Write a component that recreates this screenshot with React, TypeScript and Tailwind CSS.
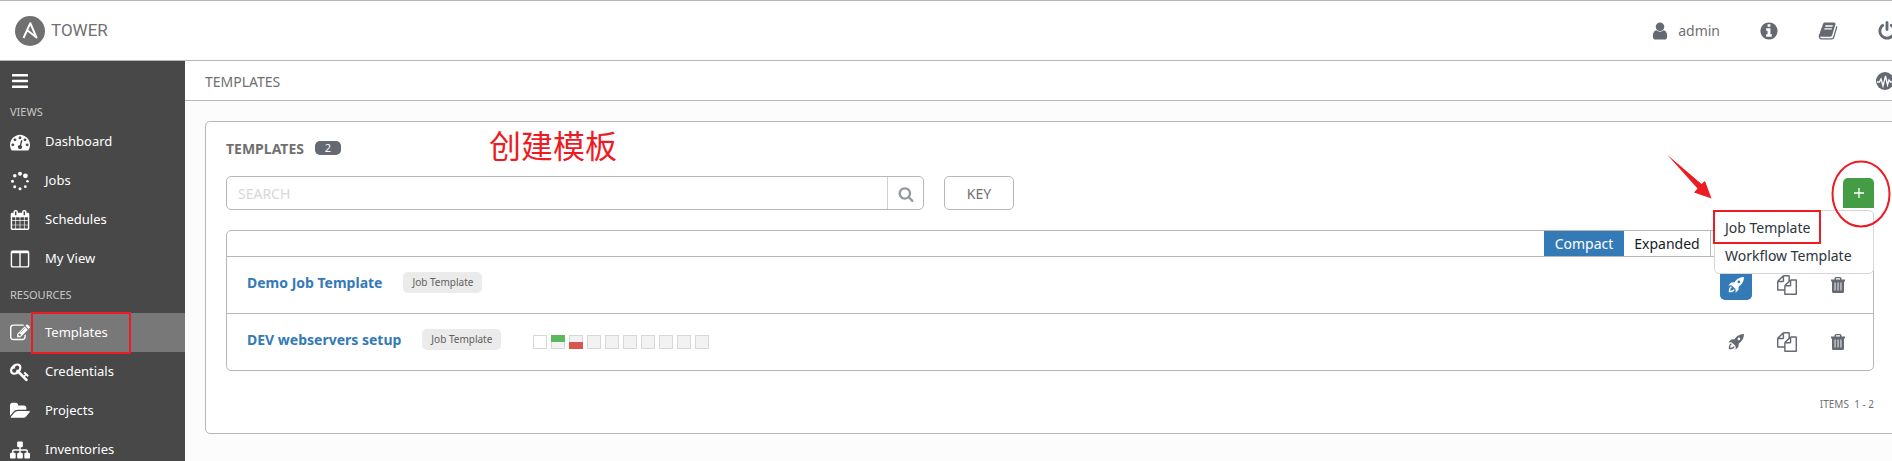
import React from 'react';

type IconProps = { d: string; box?: string; className?: string };

function Icon({ d, box = '0 0 1792 1792', className = '' }: IconProps) {
  return (
    <svg viewBox={box} className={className} fill="currentColor" aria-hidden="true">
      <path d={d} fillRule="evenodd" />
    </svg>
  );
}

const P = {
  dashboard:
    'M384 1152q0-53-37.5-90.5T256 1024t-90.5 37.5T128 1152t37.5 90.5T256 1280t90.5-37.5T384 1152zm192-448q0-53-37.5-90.5T448 576t-90.5 37.5T320 704t37.5 90.5T448 832t90.5-37.5T576 704zm428 481l101-382q6-26-7.5-48.5T1059 725t-48 6.5-30 39.5L880 1154q-60 5-107 43.5t-63 98.5q-20 77 20 146t117 89 146-20 89-117q16-60-6-117t-72-91zm660-33q0-53-37.5-90.5T1536 1024t-90.5 37.5T1408 1152t37.5 90.5T1536 1280t90.5-37.5T1664 1152zm-640-640q0-53-37.5-90.5T896 384t-90.5 37.5T768 512t37.5 90.5T896 640t90.5-37.5T1024 512zm448 192q0-53-37.5-90.5T1344 576t-90.5 37.5T1216 704t37.5 90.5T1344 832t90.5-37.5T1472 704zm320 448q0 261-141 483-19 29-54 29H195q-35 0-54-29Q0 1414 0 1152q0-182 71-348t191-286 286-191 348-71 348 71 286 191 191 286 71 348z',
  calendar:
    'M192 1664h288v-288H192v288zm352 0h320v-288H544v288zm-352-352h288V992H192v320zm352 0h320V992H544v320zM192 928h288V640H192v288zm736 736h320v-288H928v288zM544 928h320V640H544v288zm768 736h288v-288h-288v288zm-384-352h320V992H928v320zM576 448V160q0-13-9.5-22.5T544 128h-64q-13 0-22.5 9.5T448 160v288q0 13 9.5 22.5T480 480h64q13 0 22.5-9.5T576 448zm736 864h288V992h-288v320zM928 928h320V640H928v288zm384 0h288V640h-288v288zm32-480V160q0-13-9.5-22.5T1312 128h-64q-13 0-22.5 9.5T1216 160v288q0 13 9.5 22.5t22.5 9.5h64q13 0 22.5-9.5t9.5-22.5zm384-64v1280q0 52-38 90t-90 38H192q-52 0-90-38t-38-90V384q0-52 38-90t90-38h128v-96q0-66 47-113T480 0h64q66 0 113 47t47 113v96h384v-96q0-66 47-113t113-47h64q66 0 113 47t47 113v96h128q52 0 90 38t38 90z',
  columns:
    'M160 1536h608V384H128v1120q0 13 9.5 22.5t22.5 9.5zm1376-32V384H896v1152h608q13 0 22.5-9.5t9.5-22.5zm128-1216v1216q0 66-47 113t-113 47H160q-66 0-113-47T0 1504V288q0-66 47-113t113-47h1344q66 0 113 47t47 113z',
  edit:
    'M888 1184l116-116-152-152-116 116v56h96v96h56zm440-720q-16-16-33 1L945 815q-17 17-1 33t33-1l350-350q17-17 1-33zm80 594v190q0 119-84.5 203.5T1120 1536H288q-119 0-203.5-84.5T0 1248V416q0-119 84.5-203.5T288 128h832q63 0 117 25 15 7 18 23 3 17-9 29l-49 49q-14 14-32 8-23-6-45-6H288q-66 0-113 47t-47 113v832q0 66 47 113t113 47h832q66 0 113-47t47-113v-126q0-13 9-22l64-64q15-15 35-7t20 29zm-96-738l288 288-672 672H640V992zm444 132l-92 92-288-288 92-92q28-28 68-28t68 28l152 152q28 28 28 68t-28 68z',
  key:
    'M832 512q0-80-56-136t-136-56-136 56-56 136q0 42 19 83-41-19-83-19-80 0-136 56t-56 136 56 136 136 56 136-56 56-136q0-42-19-83 41 19 83 19 80 0 136-56t56-136zm851 704q0 17-49 66t-66 49q-9 0-28.5-16t-36.5-33-38.5-40-24.5-26l-96 96 220 220q28 28 28 68 0 42-39 81t-81 39q-40 0-68-28l-671-671q-176 131-365 131-163 0-265.5-102.5T0 784q0-160 95-313t248-248 313-95q163 0 265.5 102.5T1024 496q0 189-131 365l355 355 96-96q-3-3-26-24.5t-40-38.5-33-36.5-16-28.5q0-17 49-66t66-49q13 0 23 10 6 6 46 44.5t82 79.5 86.5 86 73 78 28.5 41z',
  folder:
    'M1815 952q0 31-31 66l-336 396q-43 51-120.5 86.5T1184 1536H96q-34 0-60.5-13T9 1480q0-31 31-66l336-396q43-51 120.5-86.5T640 896h1088q34 0 60.5 13t26.5 43zm-343-344v160H640q-94 0-197 47.5T279 935L-58 1331l-5 6q0-4-.5-12.5T-64 1312V352q0-92 66-158t158-66h320q92 0 158 66t66 158v32h544q92 0 158 66t66 158z',
  sitemap:
    'M1792 1248v320q0 40-28 68t-68 28h-320q-40 0-68-28t-28-68v-320q0-40 28-68t68-28h96V960H960v192h96q40 0 68 28t28 68v320q0 40-28 68t-68 28H736q-40 0-68-28t-28-68v-320q0-40 28-68t68-28h96V960H320v192h96q40 0 68 28t28 68v320q0 40-28 68t-68 28H96q-40 0-68-28t-28-68v-320q0-40 28-68t68-28h96V960q0-52 38-90t90-38h512V640h-96q-40 0-68-28t-28-68V224q0-40 28-68t68-28h320q40 0 68 28t28 68v320q0 40-28 68t-68 28h-96v192h512q52 0 90 38t38 90v192h96q40 0 68 28t28 68z',
  user:
    'M1536 1399q0 109-62.5 187t-150.5 78H469q-88 0-150.5-78T256 1399q0-85 8.5-160.5t31.5-152 58.5-131 94-89T583 832q131 128 313 128t313-128q76 0 134.5 34.5t94 89 58.5 131 31.5 152 8.5 160.5zm-256-887q0 159-112.5 271.5T896 896 624.5 783.5 512 512t112.5-271.5T896 128t271.5 112.5T1280 512z',
  info:
    'M1152 1376v-160q0-14-9-23t-23-9h-96V672q0-14-9-23t-23-9H672q-14 0-23 9t-9 23v160q0 14 9 23t23 9h96v320h-96q-14 0-23 9t-9 23v160q0 14 9 23t23 9h448q14 0 23-9t9-23zm-128-896V320q0-14-9-23t-23-9H800q-14 0-23 9t-9 23v160q0 14 9 23t23 9h192q14 0 23-9t9-23zm640 416q0 209-103 385.5T1281.5 1561 896 1664t-385.5-103T231 1281.5 128 896t103-385.5T510.5 231 896 128t385.5 103T1561 510.5 1664 896z',
  book:
    'M1703 478q40 57 18 129l-275 906q-19 64-76.5 107.5T1247 1664H324q-77 0-148.5-53.5T76 1479q-24-67-2-127 0-4 3-27t4-37q1-8-3-21.5t-3-19.5q2-11 8-21t16.5-23.5T116 1179q23-38 45-91.5t30-91.5q3-10 .5-30t-.5-28q3-11 17-28t17-23q21-36 42-92t25-90q1-9-2.5-32t.5-28q4-13 22-30.5t22-22.5q19-26 42.5-84.5T404 411q1-8-3-25.5t-2-26.5q2-8 9-18t18-23 17-21q8-12 16.5-30.5t15-35 16-36 19.5-32T533.5 139t36-11.5T617 133l-1 3q38-9 51-9h761q74 0 114 56t18 130l-274 906q-36 119-71.5 153.5T1086 1407H217q-27 0-38 15-11 16-1 43 24 70 144 70h923q29 0 56-15.5t35-41.5l300-987q7-22 5-57 38 15 59 43zm-1064 2q-4 13 2 22.5t20 9.5h608q13 0 25.5-9.5T1311 480l21-64q4-13-2-22.5t-20-9.5H702q-13 0-25.5 9.5T660 416zm-83 256q-4 13 2 22.5t20 9.5h608q13 0 25.5-9.5T1228 736l21-64q4-13-2-22.5t-20-9.5H619q-13 0-25.5 9.5T577 672z',
  power:
    'M1664 896q0 156-61 298t-164 245-245 164-298 61-298-61-245-164-164-245-61-298q0-182 80.5-343T434 283q43-32 95.5-25t83.5 50q32 42 24.5 94.5T587 489q-98 74-151.5 181T382 896q0 104 40.5 198.5T532 1258t163.5 109.5T894 1408t198.5-40.5T1256 1258t109.5-163.5T1406 896q0-119-53.5-226T1201 489q-42-32-49.5-84.5T1176 310q31-43 84-50t95 25q145 109 225.5 270t80.5 341zM1024 128v640q0 52-38 90t-90 38-90-38-38-90V128q0-52 38-90t90-38 90 38 38 90z',
  search:
    'M1216 832q0-185-131.5-316.5T768 384 451.5 515.5 320 832t131.5 316.5T768 1280t316.5-131.5T1216 832zm512 832q0 52-38 90t-90 38q-54 0-90-38l-343-342q-179 124-399 124-143 0-273.5-55.5t-225-150-150-225T64 832t55.5-273.5 150-225 225-150T768 128t273.5 55.5 225 150 150 225T1472 832q0 220-124 399l343 343q37 37 37 90z',
  copy:
    'M1696 384q40 0 68 28t28 68v1216q0 40-28 68t-68 28H736q-40 0-68-28t-28-68v-288H96q-40 0-68-28t-28-68V640q0-40 20-88t48-76L476 68q28-28 76-48t88-20h416q40 0 68 28t28 68v328q68-40 128-40zm-544 213L853 896h299zM512 213L213 512h299zm196 647l316-316V128H640v416q0 40-28 68t-68 28H128v640h512v-256q0-40 20-88t48-76zm956 804V512h-384v416q0 40-28 68t-68 28H768v640z',
};

function SpinnerIcon() {
  return (
    <svg viewBox="0 0 20 20" className="size-5" fill="currentColor" aria-hidden="true">
      <circle cx="10" cy="2.7" r="2" />
      <circle cx="15.4" cy="4.8" r="2.4" />
      <circle cx="17.5" cy="10.3" r="1.3" />
      <circle cx="15.3" cy="15.7" r="1.4" />
      <circle cx="10" cy="17.8" r="1.5" />
      <circle cx="4.7" cy="15.7" r="1.5" />
      <circle cx="2.5" cy="10.3" r="1.5" />
      <circle cx="4.8" cy="4.8" r="1.8" />
    </svg>
  );
}

function RocketIcon() {
  return (
    <svg viewBox="0 0 16 16" className="size-4" fill="currentColor" aria-hidden="true">
      <path
        fillRule="evenodd"
        d="M16 0C12.500.2 9.800 1.300 7.800 3.600L6.500 5.200 3.200 5.600.2 8.600 3.300 8.300 4.400 9 7 11.600 7.800 12.900 7.400 15.800 10.400 12.900 10.800 9.500 12.400 8.200C14.800 6.200 15.800 3.500 16 0ZM10.900 3.600A1.300 1.300 0 1 1 10.900 6.200 1.300 1.300 0 0 1 10.900 3.600ZM3.300 9.300C1.200 10 .7 12.300.8 15.200 3.700 15.300 6 14.800 6.700 12.700L5.500 12.300C5 13.400 3.800 13.800 2.300 13.700 2.200 12.200 2.600 11 3.700 10.500Z"
      />
    </svg>
  );
}

function TrashIcon() {
  return (
    <svg viewBox="0 0 14 16" className="h-4 w-[14px]" fill="currentColor" aria-hidden="true">
      <path
        fillRule="evenodd"
        d="M3.500 2.500V1.500Q3.500 0 5 0H9Q10.500 0 10.500 1.500V2.500H14V4.500H13V14.500Q13 16 11.500 16H2.500Q1 16 1 14.500V4.500H0V2.500ZM5 2.500H9V1.300H5ZM3.600 5.500V13.500H4.500V5.500ZM6.600 5.500V13.500H7.500V5.500ZM9.500 5.500V13.500H10.400V5.500Z"
      />
    </svg>
  );
}

type NavItem = { label: string; icon: React.ReactNode; active?: boolean };

const views: NavItem[] = [
  { label: 'Dashboard', icon: <Icon d={P.dashboard} className="size-5" /> },
  { label: 'Jobs', icon: <SpinnerIcon /> },
  { label: 'Schedules', icon: <Icon d={P.calendar} className="size-5" /> },
  { label: 'My View', icon: <Icon d={P.columns} box="-64 0 1792 1792" className="size-5" /> },
];

const resources: NavItem[] = [
  { label: 'Templates', icon: <Icon d={P.edit} className="size-5" />, active: true },
  { label: 'Credentials', icon: <Icon d={P.key} className="size-5" /> },
  { label: 'Projects', icon: <Icon d={P.folder} box="-64 0 1880 1792" className="size-5" /> },
  { label: 'Inventories', icon: <Icon d={P.sitemap} className="size-5" /> },
];

function NavGroup({ title, items, className = '' }: { title: string; items: NavItem[]; className?: string }) {
  return (
    <section>
      <h2 className={'pl-[10px] text-[11px] leading-5 text-[#c8c8c8] ' + className}>{title}</h2>
      <ul>
        {items.map((item) => (
          <li key={item.label}>
            <a
              href="#"
              className={
                'flex h-[39px] items-center gap-[15px] pl-[10px] text-[13px] text-white ' +
                (item.active ? 'bg-[#787878]' : '')
              }
            >
              {item.icon}
              <span className="relative flex h-full items-center">
                {item.label}
                {item.active && (
                  <span className="pointer-events-none absolute -top-px -right-[23px] -bottom-[2px] -left-[14px] border-2 border-[#ed1c24]" />
                )}
              </span>
            </a>
          </li>
        ))}
      </ul>
    </section>
  );
}

type Status = 'none' | 'ok' | 'failed' | 'empty';

function Sparkline({ runs }: { runs: Status[] }) {
  return (
    <div className="flex gap-1">
      {runs.map((run, i) => (
        <span
          key={i}
          className={
            'flex size-[14px] flex-col border border-[#d7d7d7] ' + (run === 'none' ? 'bg-white' : 'bg-[#f2f2f2]')
          }
        >
          {run === 'ok' && <span className="-mx-px -mt-px h-[7px] shrink-0 bg-[#5cb85c]" />}
          {run === 'failed' && <span className="-mx-px -mb-px mt-auto h-[7px] shrink-0 bg-[#d9534f]" />}
        </span>
      ))}
    </div>
  );
}

type Template = { name: string; primary?: boolean; runs?: Status[] };

const templates: Template[] = [
  { name: 'Demo Job Template', primary: true },
  {
    name: 'DEV webservers setup',
    runs: ['none', 'ok', 'failed', 'empty', 'empty', 'empty', 'empty', 'empty', 'empty', 'empty'],
  },
];

function TemplateRow({ item }: { item: Template }) {
  return (
    <li className="flex h-[57px] items-center border-t border-[#b7b7b7] pr-[19px] pl-5">
      <a href="#" className="mb-[6px] text-[14px] font-bold text-[#337ab7]">
        {item.name}
      </a>
      <span className="mb-[6px] ml-[21px] rounded-[5px] bg-[#ebebeb] px-[9px] text-[10px] leading-[21px] text-[#606060]">
        Job Template
      </span>
      {item.runs && (
        <div className="ml-8">
          <Sparkline runs={item.runs} />
        </div>
      )}
      <div className="ml-auto flex items-center gap-[19px] text-[#646972]">
        <button
          aria-label={'Launch ' + item.name}
          className={
            'flex h-[30px] w-8 items-center justify-center rounded-[5px] ' +
            (item.primary ? 'bg-[#337ab7] text-white' : '')
          }
        >
          <RocketIcon />
        </button>
        <button aria-label={'Copy ' + item.name} className="flex h-[30px] w-8 items-center justify-center">
          <Icon d={P.copy} className="size-5" />
        </button>
        <button aria-label={'Delete ' + item.name} className="flex h-[30px] w-8 items-center justify-center">
          <TrashIcon />
        </button>
      </div>
    </li>
  );
}

export default function App() {
  return (
    <div className="flex min-h-screen flex-col overflow-hidden bg-[#fcfcfc] font-['Noto_Sans','Noto_Sans_CJK_SC',sans-serif] text-[#707070]">
      <header className="flex h-[61px] shrink-0 items-center justify-between border-t border-b border-[#b7b7b7] bg-white pl-[15px]">
        <a href="#" className="flex items-center gap-[6px] text-[17px]">
          <svg viewBox="0 0 30 30" className="size-[30px]" aria-hidden="true">
            <circle cx="15" cy="15" r="15" fill="#707070" />
            <path d="M8.500 22 15.300 7.200 21.500 21.500 12 14" fill="none" stroke="#fff" strokeWidth="2" strokeLinejoin="round" />
          </svg>
          <span className="font-['Roboto',sans-serif]">TOWER</span>
        </a>
        <nav className="-mr-[5px] flex items-center gap-[39px] text-[#646972]">
          <a href="#" className="flex items-center gap-2 text-[14px]">
            <Icon d={P.user} className="size-5" />
            <span className="text-[#707070]">admin</span>
          </a>
          <a href="#" aria-label="About">
            <Icon d={P.info} className="size-5" />
          </a>
          <a href="#" aria-label="Documentation">
            <Icon d={P.book} className="size-5" />
          </a>
          <a href="#" aria-label="Log out">
            <Icon d={P.power} className="size-5" />
          </a>
        </nav>
      </header>

      <div className="flex h-[400px] flex-1">
        <aside className="w-[185px] shrink-0 overflow-hidden bg-[#484848]">
          <button aria-label="Toggle menu" className="flex h-[41px] items-center pb-px pl-3 text-white">
            <svg viewBox="0 0 16 14" className="h-[14px] w-4" fill="currentColor" aria-hidden="true">
              <rect width="16" height="2.500" rx=".5" />
              <rect y="5.700" width="16" height="2.500" rx=".5" />
              <rect y="11.400" width="16" height="2.500" rx=".5" />
            </svg>
          </button>
          <NavGroup title="VIEWS" items={views} />
          <NavGroup title="RESOURCES" items={resources} className="pt-[7px] pb-2" />
        </aside>

        <main className="min-w-0 flex-1">
          <div className="flex h-10 items-center justify-between border-b border-[#b7b7b7] bg-white pl-5">
            <h1 className="pt-[2px] text-[14px]">TEMPLATES</h1>
            <button aria-label="Activity stream" className="-mr-[2px] text-[#646972]">
              <svg viewBox="0 0 18 18" className="size-[18px]" aria-hidden="true">
                <circle cx="9" cy="9" r="9" fill="currentColor" />
                <path d="M1 10h2.500L5 7l2 7 2.500-10 2 9 1.500-5 1.500 2H17" fill="none" stroke="#fff" strokeWidth="1.300" />
              </svg>
            </button>
          </div>

          <section className="-mr-2 mt-5 ml-5 rounded-[5px] border border-[#b7b7b7] bg-white pt-[14px] pr-[25px] pb-5 pl-5">
            <div className="flex h-6 items-center">
              <h2 className="text-[14px] font-bold">TEMPLATES</h2>
              <span className="ml-[11px] h-[14px] w-[26px] rounded-[5px] bg-[#646972] text-center text-[11px] leading-[14px] text-white">
                2
              </span>
              <p className="mb-1 ml-[148px] text-[32px] leading-6 text-[#ed1c24]">创建模板</p>
            </div>

            <div className="mt-4 flex h-[34px] items-stretch">
              <form className="flex w-[698px] rounded-[5px] border border-[#b7b7b7]">
                <input
                  aria-label="Search"
                  placeholder="SEARCH"
                  className="min-w-0 flex-1 bg-transparent pl-[11px] text-[14px] outline-none placeholder:text-[#d7d7d7]"
                />
                <button
                  type="button"
                  aria-label="Search templates"
                  className="flex w-9 items-center justify-center border-l border-[#d0d0d0] pt-[2px] text-[#93979f]"
                >
                  <Icon d={P.search} className="size-4" />
                </button>
              </form>
              <button className="ml-5 w-[70px] rounded-[5px] border border-[#b7b7b7] text-[14px]">KEY</button>
              <div className="relative mt-[2px] ml-auto">
                <button
                  aria-label="Add template"
                  className="flex h-[30px] w-[31px] items-center justify-center rounded-t-[5px] bg-[#449d44] text-white"
                >
                  <svg viewBox="0 0 10 10" className="size-[10px]" stroke="currentColor" strokeWidth="1.300" aria-hidden="true">
                    <path d="M5 0V10M0 5H10" />
                  </svg>
                </button>
                <svg
                  viewBox="0 0 60 68"
                  className="pointer-events-none absolute -top-[18px] -left-3 z-20 h-[68px] w-[60px]"
                  fill="none"
                  stroke="#ed1c24"
                  strokeWidth="2"
                  aria-hidden="true"
                >
                  <ellipse cx="30" cy="34" rx="28.500" ry="32.500" />
                </svg>
                <svg
                  viewBox="0 0 46 46"
                  className="pointer-events-none absolute -top-6 right-[162px] size-[46px]"
                  fill="#ed1c24"
                  aria-hidden="true"
                >
                  <path d="M1 .5 35.500 30 39 27 45.500 44.500 28 38.500 31.500 34.500Z" />
                </svg>
                <ul className="absolute top-8 right-0 z-10 w-[160px] rounded-[5px] border border-[#d7d7d7] bg-white py-[3px] text-[14px] whitespace-nowrap text-[#2d353c]">
                  <li className="relative">
                    <a href="#" className="block pl-[10px] leading-7">
                      Job Template
                    </a>
                    <span className="pointer-events-none absolute -top-1 -left-[2px] h-[34px] w-[108px] border-2 border-[#ed1c24]" />
                  </li>
                  <li>
                    <a href="#" className="block pl-[10px] leading-7">
                      Workflow Template
                    </a>
                  </li>
                </ul>
              </div>
            </div>

            <div className="mt-5 rounded-[5px] border border-[#b7b7b7]">
              <div className="flex h-[25px] justify-end pr-[162px] text-[14px]">
                <button className="w-20 bg-[#337ab7] text-white">Compact</button>
                <button className="w-[87px] border-r border-[#b7b7b7] text-[#161b1f]">Expanded</button>
              </div>
              <ul>
                {templates.map((t) => (
                  <TemplateRow key={t.name} item={t} />
                ))}
              </ul>
            </div>
            <p className="mt-6 text-right text-[10px] leading-[18px]">ITEMS&nbsp; 1 - 2</p>
          </section>
        </main>
      </div>
    </div>
  );
}
